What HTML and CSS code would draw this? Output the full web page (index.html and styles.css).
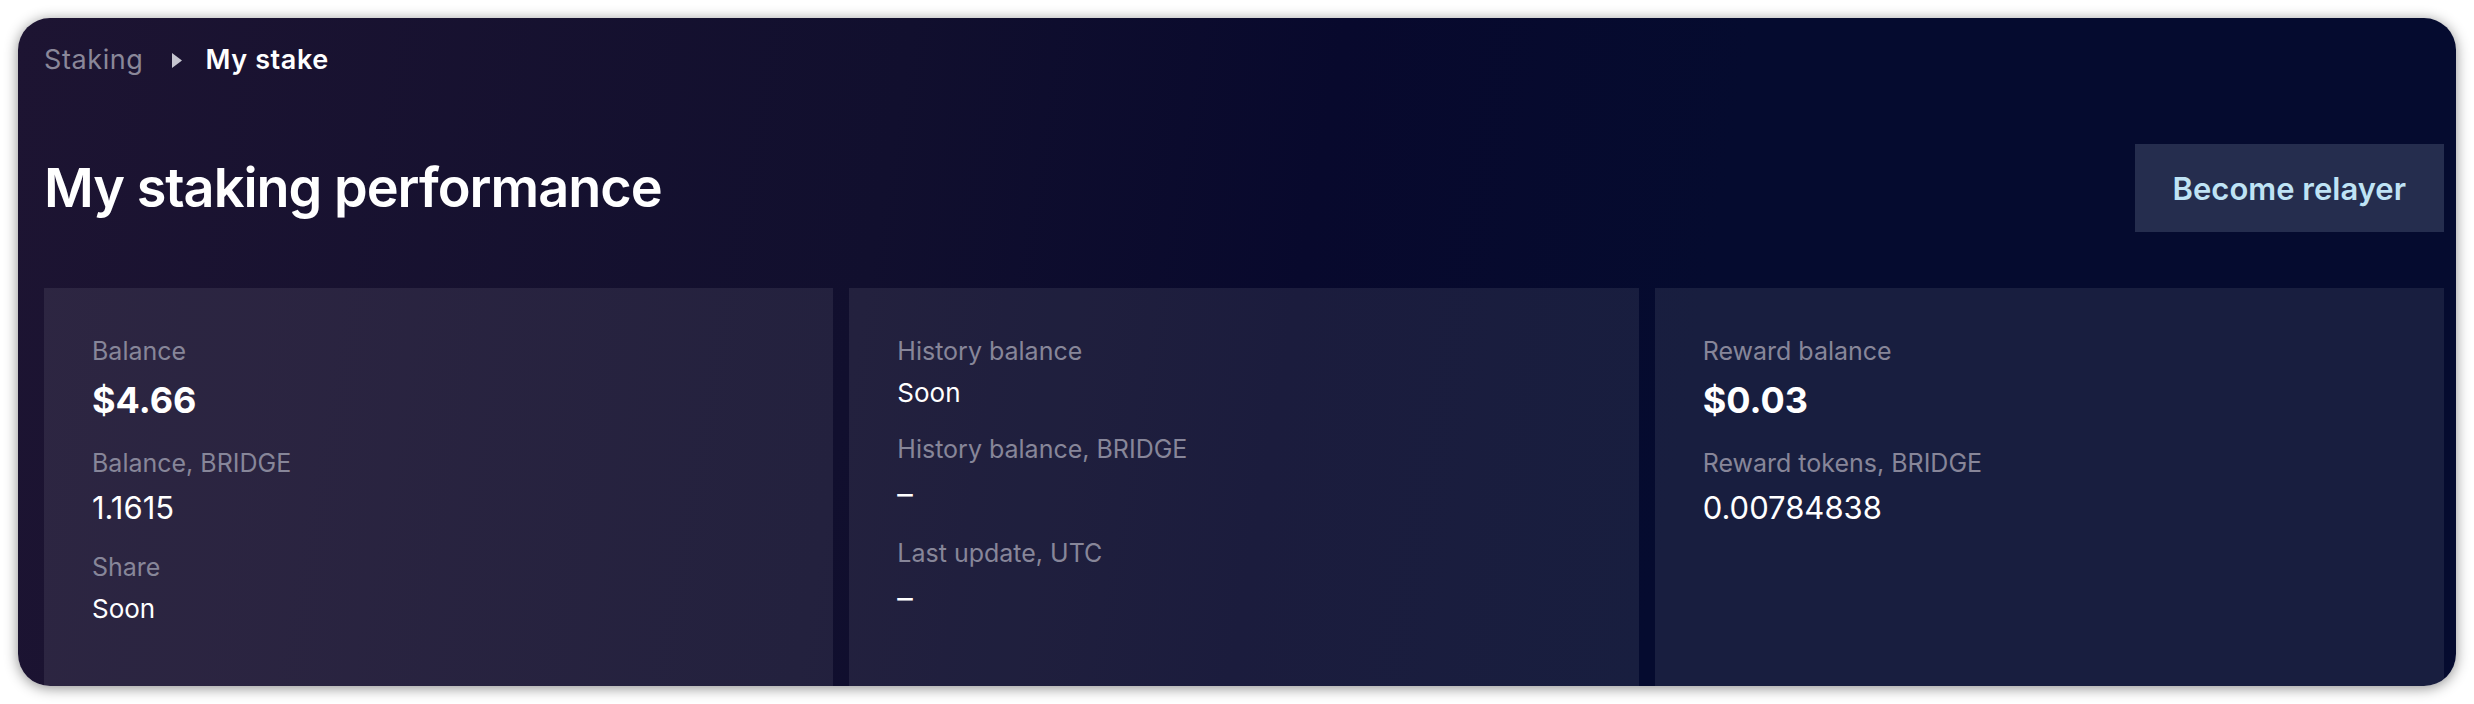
FILE: index.html
```html
<!DOCTYPE html>
<html lang="en">
<head>
<meta charset="utf-8">
<title>My stake</title>
<link rel="stylesheet" href="styles.css">
</head>
<body>
<main class="panel">
  <nav class="crumbs">
    <span class="crumb-link">Staking</span>
    <svg class="crumb-arrow" width="10" height="15" viewBox="0 0 10 15"><path d="M0 0 L10 7.5 L0 15 Z" fill="currentColor"/></svg>
    <span class="crumb-current">My stake</span>
  </nav>
  <header class="head">
    <h1 class="title">My staking performance</h1>
    <button class="btn">Become relayer</button>
  </header>
  <section class="stats">
    <div class="stat-card">
      <div class="item">
        <div class="label">Balance</div>
        <div class="value big">$4.66</div>
      </div>
      <div class="item">
        <div class="label">Balance, BRIDGE</div>
        <div class="value num">1.1615</div>
      </div>
      <div class="item">
        <div class="label">Share</div>
        <div class="value text">Soon</div>
      </div>
    </div>
    <div class="stat-card">
      <div class="item">
        <div class="label">History balance</div>
        <div class="value text">Soon</div>
      </div>
      <div class="item">
        <div class="label">History balance, BRIDGE</div>
        <div class="value num">–</div>
      </div>
      <div class="item">
        <div class="label">Last update, UTC</div>
        <div class="value num">–</div>
      </div>
    </div>
    <div class="stat-card">
      <div class="item">
        <div class="label">Reward balance</div>
        <div class="value big">$0.03</div>
      </div>
      <div class="item">
        <div class="label">Reward tokens, BRIDGE</div>
        <div class="value num">0.00784838</div>
      </div>
    </div>
  </section>
</main>
</body>
</html>
```
FILE: styles.css
```css
* { box-sizing: border-box; }
html, body { margin: 0; padding: 0; background: #ffffff; }
body {
  font-family: Inter, "Noto Sans", "Liberation Sans", sans-serif;
  color: #ffffff;
}
.panel {
  margin: 18px;
  height: 668px;
  border-radius: 32px;
  overflow: hidden;
  padding: 27px 12px 14px 26px;
  display: flex;
  flex-direction: column;
  background: linear-gradient(100deg, #1d1432 0%, #110f2e 35%, #08092d 52%, #050b2f 68%, #050b2f 100%);
  box-shadow: 0 2px 14px rgba(0, 0, 0, 0.45);
}
.crumbs {
  display: flex;
  align-items: center;
  height: 30px;
  font-size: 27px;
  line-height: 30px;
  letter-spacing: 0.6px;
}
.crumb-link { color: #8a8799; }
.crumb-arrow { color: #c6c5d0; margin: 0 24px 0 28px; }
.crumb-current { color: #ffffff; font-weight: 600; }
.head {
  margin-top: 69px;
  display: flex;
  align-items: center;
  justify-content: space-between;
}
.title {
  margin: 0;
  font-size: 54px;
  font-weight: 600;
  line-height: 66px;
  letter-spacing: -1px;
}
.btn {
  height: 88px;
  padding: 0 38px;
  border: 0;
  background: #252d4e;
  color: #bfe3f5;
  font-family: inherit;
  font-size: 31px;
  font-weight: 600;
}
.stats {
  margin-top: 56px;
  flex: 1;
  display: grid;
  grid-template-columns: repeat(3, 1fr);
  gap: 16px;
}
.stat-card {
  background: rgba(255, 255, 255, 0.08);
  padding: 48px;
}
.item { margin-bottom: 26px; }
.label {
  color: #878699;
  font-size: 25px;
  line-height: 30px;
}
.value { margin-top: 12px; color: #ffffff; }
.value.big { font-size: 36px; font-weight: 700; line-height: 44px; }
.value.num { font-size: 31px; line-height: 36px; }
.value.text { font-size: 26px; line-height: 30px; }
```
